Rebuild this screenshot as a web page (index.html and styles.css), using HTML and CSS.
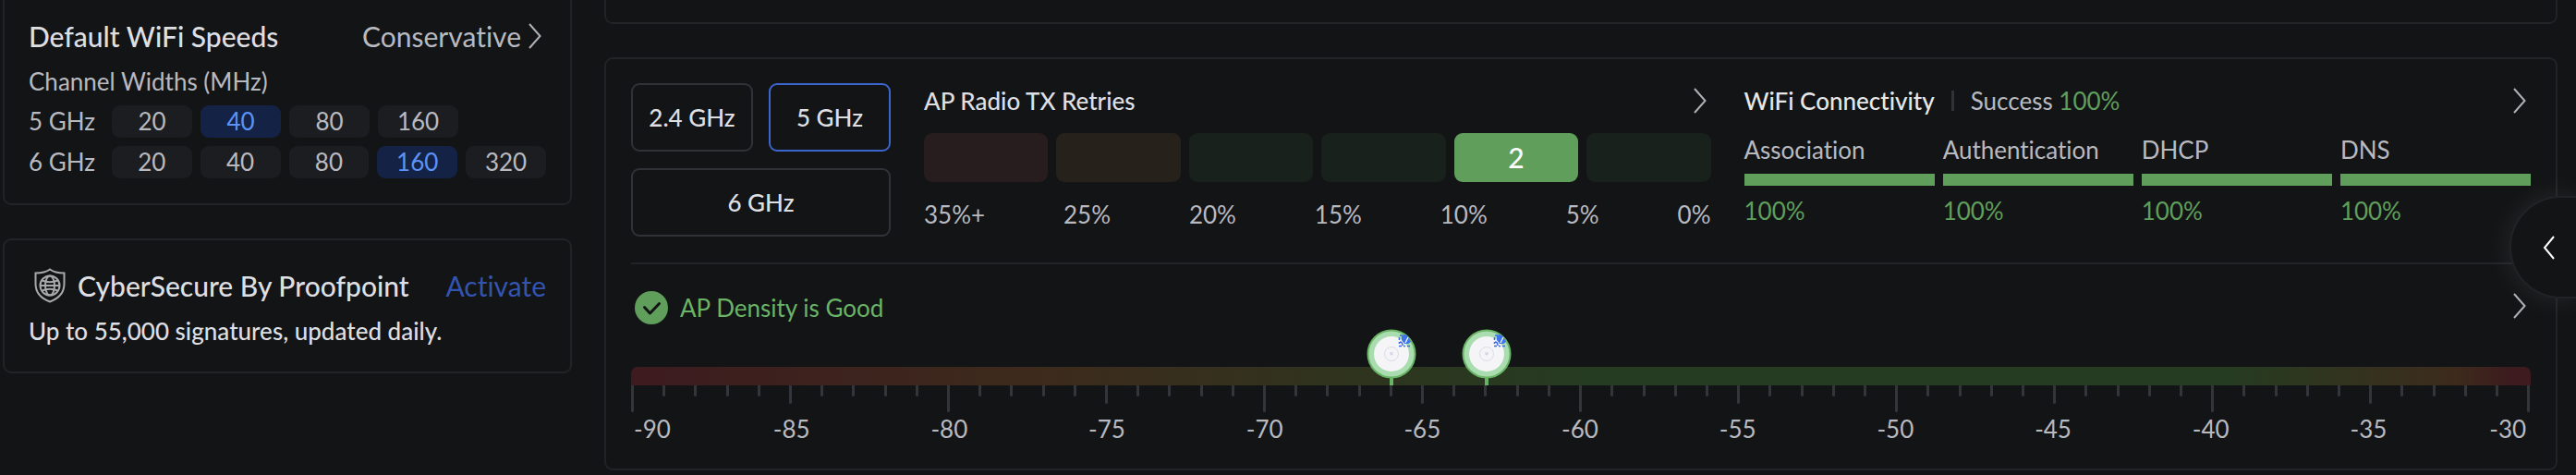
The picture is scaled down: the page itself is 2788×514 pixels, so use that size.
FILE: index.html
```html
<!DOCTYPE html>
<html lang="en">
<head>
<meta charset="utf-8">
<title>WiFi Overview</title>
<link rel="stylesheet" href="styles.css">
</head>
<body>
<div class="page">
  <aside class="sidebar">
    <section class="card card-cut speeds">
      <header class="row">
        <h2 class="title">Default WiFi Speeds</h2>
        <a class="value-link" href="#">Conservative
          <svg class="chevron" viewBox="0 0 14 28"><path d="M1 1 12.500 14 1 27"/></svg>
        </a>
      </header>
      <p class="label">Channel Widths (MHz)</p>
      <div class="widths">
        <span class="band">5 GHz</span><span class="chip">20</span><span class="chip chip-on">40</span><span class="chip">80</span><span class="chip">160</span>
      </div>
      <div class="widths">
        <span class="band">6 GHz</span><span class="chip">20</span><span class="chip">40</span><span class="chip">80</span><span class="chip chip-on">160</span><span class="chip">320</span>
      </div>
    </section>
    <section class="card secure">
      <header class="row">
        <svg class="shield" viewBox="0 0 34 38"><path d="M17 1.500C13 4.500 7 5.500 1.500 5.500V17c0 9.500 6 16 15.500 19.500C26.500 33 32.500 26.500 32.500 17V5.500C27 5.500 21 4.500 17 1.500Z"/><circle cx="17" cy="19" r="10.500"/><ellipse cx="17" cy="19" rx="5" ry="10.500"/><path d="M6.500 19h21M8.500 13.500c5 2 12 2 17 0M8.500 24.500c5-2 12-2 17 0"/></svg>
        <h2 class="title">CyberSecure By Proofpoint</h2>
        <a class="activate" href="#">Activate</a>
      </header>
      <p class="note">Up to 55,000 signatures, updated daily.</p>
    </section>
  </aside>

  <main class="main">
    <section class="card card-cut stub"></section>
    <section class="card radio">
      <div class="stats">
        <div class="bands">
          <button class="band-btn" type="button">2.4 GHz</button>
          <button class="band-btn band-btn-on" type="button">5 GHz</button>
          <button class="band-btn band-btn-wide" type="button">6 GHz</button>
        </div>
        <div class="retries">
          <header class="row">
            <h3 class="subtitle">AP Radio TX Retries</h3>
            <a class="more" href="#" aria-label="Open retries"><svg class="chevron" viewBox="0 0 14 28"><path d="M1 1 12.500 14 1 27"/></svg></a>
          </header>
          <div class="bins">
            <span class="bin bin-bad"></span><span class="bin bin-warn"></span><span class="bin"></span><span class="bin"></span><span class="bin bin-on">2</span><span class="bin"></span>
          </div>
          <div class="bin-labels"><span>35%+</span><span>25%</span><span>20%</span><span>15%</span><span>10%</span><span>5%</span><span>0%</span></div>
        </div>
        <div class="connectivity">
          <header class="row">
            <h3 class="subtitle strong">WiFi Connectivity</h3>
            <span class="divider"></span>
            <span class="success">Success <span class="good">100%</span></span>
            <a class="more" href="#" aria-label="Open connectivity"><svg class="chevron" viewBox="0 0 14 28"><path d="M1 1 12.500 14 1 27"/></svg></a>
          </header>
          <div class="stages">
            <div class="stage"><span>Association</span><span class="bar"></span><span class="good">100%</span></div>
            <div class="stage"><span>Authentication</span><span class="bar"></span><span class="good">100%</span></div>
            <div class="stage"><span>DHCP</span><span class="bar"></span><span class="good">100%</span></div>
            <div class="stage"><span>DNS</span><span class="bar"></span><span class="good">100%</span></div>
          </div>
        </div>
      </div>
      <div class="density">
        <header class="row">
          <svg class="check" viewBox="0 0 36 36"><circle cx="18" cy="18" r="18"/><path d="M10.500 17.500 16.500 24 26.500 13.500"/></svg>
          <h3 class="density-title">AP Density is Good</h3>
          <a class="more" href="#" aria-label="Open density"><svg class="chevron" viewBox="0 0 14 28"><path d="M1 1 12.500 14 1 27"/></svg></a>
        </header>
        <div class="scale">
          <div class="gradient"></div>
          <div class="pin" style="left:40%"></div>
          <div class="pin" style="left:45%"></div>
          <div class="ticks"></div>
          <div class="scale-labels"><span>-90</span><span>-85</span><span>-80</span><span>-75</span><span>-70</span><span>-65</span><span>-60</span><span>-55</span><span>-50</span><span>-45</span><span>-40</span><span>-35</span><span>-30</span></div>
        </div>
      </div>
    </section>
  </main>
  <button class="drawer" type="button" aria-label="Open panel"><svg viewBox="0 0 14 26"><path d="M12 1 2 13 12 25"/></svg></button>
</div>
<script src="scale.js"></script>
</body>
</html>
```

FILE: styles.css
```css
* { box-sizing: border-box; }
body { margin: 0; background: #131416; color: #b8bac0; font: 26px/32px Lato, "Open Sans", sans-serif; font-variant-ligatures: none; overflow: hidden; }
h2, h3, p { margin: 0; font-size: 26px; font-weight: 400; }
a { color: inherit; text-decoration: none; }
.page { position: relative; display: flex; gap: 35px; padding: 0 20px 6px 3px; }
.sidebar { width: 616px; flex: none; display: flex; flex-direction: column; gap: 36px; }
.main { flex: 1; display: flex; flex-direction: column; gap: 36px; }
.card { border: 2px solid #222326; border-radius: 9px; padding: 27px; }
.card-cut { border-top: 0; border-radius: 0 0 9px 9px; }
.row { display: flex; align-items: center; }
.title { font-size: 30px; line-height: 40px; font-weight: 500; color: #dedfe2; }
.subtitle { color: #dedfe2; font-weight: 500; }
.chevron { width: 14px; height: 28px; fill: none; stroke: #b0b1b5; stroke-width: 2; display: block; }
.more { margin-left: auto; margin-right: 5px; }

.speeds { padding: 19px 26px 27px; }
.value-link { margin-left: auto; margin-right: 5px; display: flex; align-items: center; gap: 8px; font-size: 30px; line-height: 40px; }
.label { margin: 13px 0 10px; }
.widths { display: flex; gap: 9px; }
.widths + .widths { margin-top: 9px; }
.band { width: 81px; line-height: 35px; }
.chip { width: 87px; height: 35px; line-height: 35px; border-radius: 9px; background: #1c1d20; text-align: center; }
.chip-on { background: #142345; color: #5c92f5; }

.secure { padding: 29px 26px 28px; }
.shield { width: 34px; height: 38px; margin: 0 13px 0 6px; fill: none; stroke: #a8a9ab; stroke-width: 2; }
.activate { margin-left: auto; font-size: 30px; color: #3254b0; }
.note { margin-top: 13px; color: #dedfe2; font-weight: 500; }

.stub { height: 26px; padding: 0; }
.radio { padding: 26px 27px 28px; }
.stats { display: flex; border-bottom: 2px solid #222326; padding-bottom: 28px; }
.bands { display: grid; grid-template-columns: 132px 132px; grid-auto-rows: 74px; gap: 18px 17px; margin-right: 36px; }
.band-btn { font: inherit; font-weight: 500; color: #dedfe2; background: none; border: 2px solid #313238; border-radius: 9px; padding: 0; }
.band-btn-on { border-color: #3c66cd; }
.band-btn-wide { grid-column: span 2; }
.retries, .connectivity { flex: 1; padding-top: 3px; }
.retries { margin-right: 36px; }
.bins { display: flex; gap: 9px; margin-top: 19px; }
.bin { flex: 1; height: 53px; border-radius: 9px; background: #19211c; }
.bin-bad { background: #271d1e; }
.bin-warn { background: #27211b; }
.bin-on { background: #5f9f5b; color: #fff; font-size: 30px; line-height: 53px; font-weight: 500; text-align: center; }
.bin-labels { display: flex; justify-content: space-between; margin-top: 19px; }
.strong { color: #e6e7e9; }
.divider { width: 3px; height: 22px; margin: 0 18px; background: #313236; }
.good { color: #5f9f5b; }
.stages { display: grid; grid-template-columns: repeat(4, 1fr); gap: 9px; margin-top: 21px; }
.stage { display: flex; flex-direction: column; }
.bar { height: 13px; margin: 10px 0 11px; background: #5f9f5b; }

.density { padding-top: 29px; }
.density .more { margin-bottom: 4px; }
.check { width: 36px; height: 36px; margin: 0 13px 0 4px; }
.check circle { fill: #5f9f5b; }
.check path { fill: none; stroke: #131416; stroke-width: 3; stroke-linecap: round; stroke-linejoin: round; }
.density-title { color: #69b465; }
.scale { position: relative; margin-top: 46px; }
.gradient { height: 20px; border-radius: 7px 7px 0 0; background: linear-gradient(90deg, #3d1b1f, #3d2b1c 22%, #2d351f 40%, #263c22 50%, #263c22 84%, #3d2b1c 96%, #3d1b1f 99%); }
.ticks { display: flex; justify-content: space-between; height: 31px; }
.tick { width: 3px; height: 12px; background: #34353b; border-radius: 0 0 2px 2px; }
.tick-mid { height: 20px; }
.tick-long { height: 29px; }
.scale-labels { display: flex; margin-bottom: -1px; }
.scale-labels span { flex: 1; text-align: center; }
.scale-labels span:first-child { flex: 0.5; text-align: left; padding-left: 3px; }
.scale-labels span:last-child { flex: 0.5; text-align: right; padding-right: 5px; }
.pin { position: absolute; top: -40px; width: 4px; height: 60px; margin-left: -1px; background: #69b465; }
.pin svg { position: absolute; left: -25px; top: -1px; width: 54px; height: 54px; }

.drawer { position: absolute; right: 0; top: 212px; width: 72px; height: 111px; padding: 0 0 0 34px; border: 2px solid #222326; border-right: 0; border-radius: 56px 0 0 56px; background: #131416; box-shadow: 0 0 32px rgba(255, 255, 255, 0.09); }
.drawer svg { display: block; width: 14px; height: 26px; fill: none; stroke: #fff; stroke-width: 2; }
```

FILE: scale.js
```js
const ticks = document.querySelector('.ticks');
for (let i = 0; i <= 60; i++) {
  const tick = document.createElement('span');
  tick.className = 'tick' + (i % 10 === 0 ? ' tick-long' : i % 5 === 0 ? ' tick-mid' : '');
  ticks.append(tick);
}
const device = `<svg viewBox="0 0 54 54">
  <circle cx="27" cy="27" r="25.500" fill="#a9dcae" stroke="#69b465" stroke-width="2"/>
  <circle cx="27" cy="27" r="19" fill="#f5f5f7"/>
  <circle cx="27" cy="27" r="7.500" fill="none" stroke="#dcdce8" stroke-width="1"/>
  <path d="M26 25v2a1 1 0 0 0 2 0v-2" fill="none" stroke="#c4c6dc" stroke-width="1"/>
  <path d="M36 7h3M35.500 9v3M35.500 14v2M35 18.500h3M40 18.500h2M44 18.500h3M36 14c2 0 3 2 3 4" fill="none" stroke="#3b6be0" stroke-width="1.500"/>
  <path d="M38 7l3-1 3 1 4 7-3 2-4 0-3-4Z" fill="#3f74ee"/>
  <path d="M45 9 42 15" stroke="#fff" stroke-width="1.200"/>
</svg>`;
document.querySelectorAll('.pin').forEach(pin => { pin.innerHTML = device; });
```
